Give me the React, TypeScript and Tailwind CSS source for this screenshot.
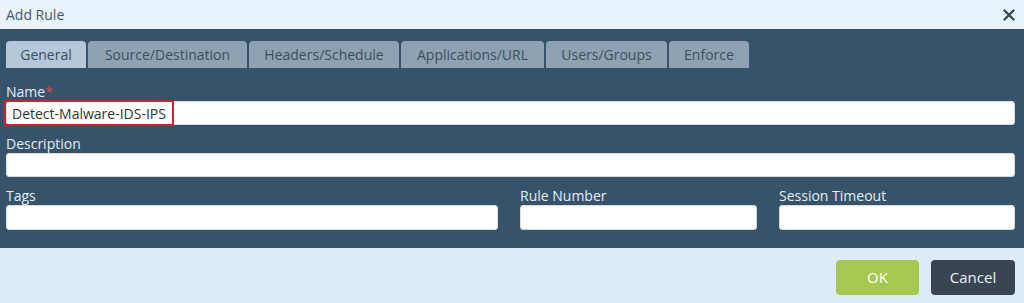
import React from 'react';

const tabs = ['General', 'Source/Destination', 'Headers/Schedule', 'Applications/URL', 'Users/Groups', 'Enforce'];
const tabWidths = ['w-[80px]', 'w-[159px]', 'w-[150px]', 'w-[143px]', 'w-[121px]', 'w-[80px]'];

const Label: React.FC<{ children: React.ReactNode }> = ({ children }) => (
  <div className="h-[19px] text-[14px] leading-[19px] text-[#e6eef5]">{children}</div>
);

const Field: React.FC<{ className?: string; children?: React.ReactNode }> = ({ className = '', children }) => (
  <div className={`h-[24px] rounded-[3px] bg-white border border-[#d6dde3] flex items-center ${className}`}>
    {children}
  </div>
);

export default function App() {
  return (
    <div className="w-[1024px] h-[303px] flex flex-col bg-[#dcebf6] font-['Open_Sans',sans-serif]">
      {/* Header */}
      <div className="h-[29px] bg-[#e9f3fb] flex items-center justify-between pl-[6px] pr-[9px]">
        <span className="text-[14px] text-[#3e5a6f]">Add Rule</span>
        <svg width="12" height="12" viewBox="0 0 12 12" className="text-[#2f4a5e]">
          <path d="M1.5 1.5 L10.5 10.5 M10.5 1.5 L1.5 10.5" stroke="currentColor" strokeWidth="2.4" strokeLinecap="round" />
        </svg>
      </div>

      {/* Body */}
      <div className="h-[219px] bg-[#36536a] pt-[12px] px-[6px]">
        <div className="flex gap-[2px] h-[27px]">
          {tabs.map((t, i) => (
            <div
              key={t}
              className={`${tabWidths[i]} rounded-t-[4px] flex items-center justify-center text-[14px] text-[#3c4e5e] ${
                i === 0 ? 'bg-[#b4c8d9]' : 'bg-[#8fa2b4]'
              }`}
            >
              {t}
            </div>
          ))}
        </div>

        <div className="mt-[14px] flex flex-col gap-[9px] w-[1009px]">
          <div>
            <Label>
              Name<span className="text-[#e0454f]">*</span>
            </Label>
            <Field>
              <span className="relative ml-[-3px] h-[26px] px-[6px] flex items-center text-[14px] text-[#333] border-2 border-[#d3202b]">
                Detect-Malware-IDS-IPS
              </span>
            </Field>
          </div>
          <div>
            <Label>Description</Label>
            <Field />
          </div>
          <div className="flex gap-[22px]">
            <div className="w-[492px]">
              <Label>Tags</Label>
              <Field className="h-[25px]" />
            </div>
            <div className="w-[237px]">
              <Label>Rule Number</Label>
              <Field className="h-[25px]" />
            </div>
            <div className="w-[236px]">
              <Label>Session Timeout</Label>
              <Field className="h-[25px]" />
            </div>
          </div>
        </div>
      </div>

      {/* Footer */}
      <div className="flex-1 flex justify-end items-start pt-[12px] pr-[9px] gap-[12px]">
        <button className="w-[83px] h-[35px] rounded-[4px] bg-[#a6c84f] text-white text-[15px]">OK</button>
        <button className="w-[84px] h-[35px] rounded-[4px] bg-[#394552] text-[#eef2f5] text-[15px]">Cancel</button>
      </div>
    </div>
  );
}
